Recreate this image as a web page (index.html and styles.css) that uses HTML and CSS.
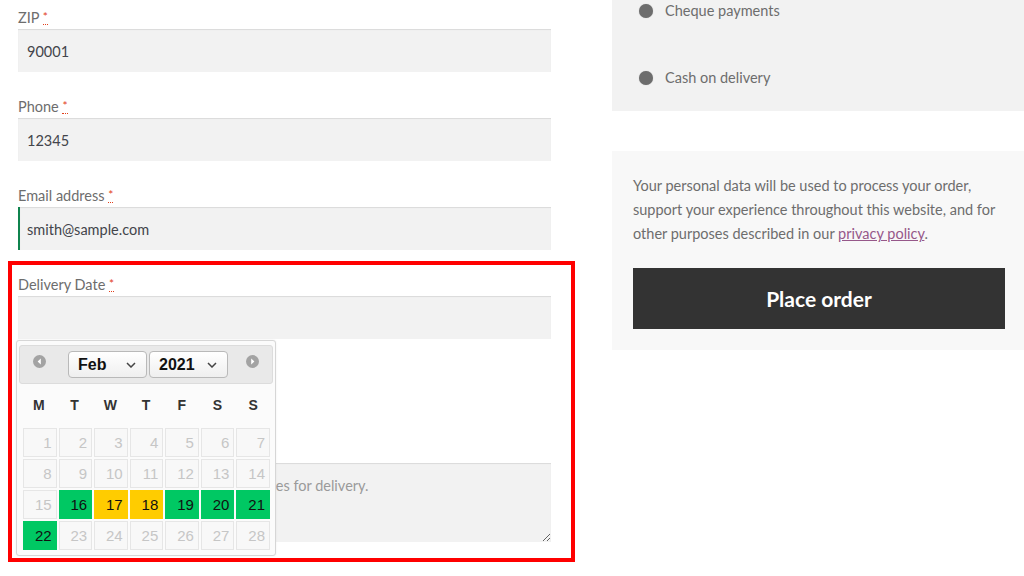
FILE: index.html
```html
<!DOCTYPE html>
<html lang="en">
<head>
<meta charset="utf-8">
<title>Checkout</title>
<link rel="stylesheet" href="styles.css">
</head>
<body>
<div class="page">
  <div class="billing">
    <div class="field">
      <label class="label">ZIP <abbr class="req">*</abbr></label>
      <div class="input">90001</div>
    </div>
    <div class="field">
      <label class="label">Phone <abbr class="req">*</abbr></label>
      <div class="input">12345</div>
    </div>
    <div class="field">
      <label class="label">Email address <abbr class="req">*</abbr></label>
      <div class="input input-valid">smith@sample.com</div>
    </div>
    <div class="field">
      <label class="label">Delivery Date <abbr class="req">*</abbr></label>
      <div class="input"></div>
    </div>
    <div class="section-gap"></div>
    <div class="field">
      <textarea class="notes" placeholder="Notes about your order, e.g. special notes for delivery."></textarea>
    </div>

    <div class="datepicker">
      <div class="dp-header">
        <span class="dp-nav"><svg width="13" height="13" viewBox="0 0 13 13"><circle cx="6.5" cy="6.5" r="6.5" fill="#a3a3a3"/><path d="M7.8 3.6 L4.6 6.5 L7.8 9.4 Z" fill="#fff"/></svg></span>
        <div class="dp-selects">
          <span class="dp-select dp-month">Feb<svg class="chev" width="10" height="6" viewBox="0 0 10 6"><path d="M1 1 L5 5 L9 1" fill="none" stroke="#444" stroke-width="1.5"/></svg></span>
          <span class="dp-select dp-year">2021<svg class="chev" width="10" height="6" viewBox="0 0 10 6"><path d="M1 1 L5 5 L9 1" fill="none" stroke="#444" stroke-width="1.5"/></svg></span>
        </div>
        <span class="dp-nav"><svg width="13" height="13" viewBox="0 0 13 13"><circle cx="6.5" cy="6.5" r="6.5" fill="#a3a3a3"/><path d="M5.2 3.6 L8.4 6.5 L5.2 9.4 Z" fill="#fff"/></svg></span>
      </div>
      <div class="dp-weekdays">
        <span>M</span><span>T</span><span>W</span><span>T</span><span>F</span><span>S</span><span>S</span>
      </div>
      <div class="dp-grid">
        <span class="day">1</span><span class="day">2</span><span class="day">3</span><span class="day">4</span><span class="day">5</span><span class="day">6</span><span class="day">7</span>
        <span class="day">8</span><span class="day">9</span><span class="day">10</span><span class="day">11</span><span class="day">12</span><span class="day">13</span><span class="day">14</span>
        <span class="day">15</span><span class="day open">16</span><span class="day busy">17</span><span class="day busy">18</span><span class="day open">19</span><span class="day open">20</span><span class="day open">21</span>
        <span class="day open">22</span><span class="day">23</span><span class="day">24</span><span class="day">25</span><span class="day">26</span><span class="day">27</span><span class="day">28</span>
      </div>
    </div>
    <div class="highlight"></div>
  </div>

  <div class="sidebar">
    <div class="payments">
      <div class="pay-item"><span class="radio"></span>Cheque payments</div>
      <div class="pay-item"><span class="radio"></span>Cash on delivery</div>
    </div>
    <div class="place">
      <p class="privacy">Your personal data will be used to process your order, support your experience throughout this website, and for other purposes described in our <a href="#" class="link">privacy policy</a>.</p>
      <button class="btn">Place order</button>
    </div>
  </div>
</div>
</body>
</html>
```

FILE: styles.css
```css
* { box-sizing: border-box; }
html, body { margin: 0; padding: 0; background: #fff; }
body {
  font-family: Lato, "Open Sans", "Liberation Sans", sans-serif;
  font-size: 15px;
  color: #6d6d6d;
  overflow: hidden;
  width: 1024px;
  height: 576px;
}
.page {
  display: flex;
  align-items: flex-start;
}
.billing {
  position: relative;
  width: 612px;
  padding: 5px 0 0 18px;
}
.field {
  width: 533px;
  margin-bottom: 22px;
}
.label {
  display: block;
  line-height: 26px;
  height: 24px;
  color: #6d6d6d;
  font-size: 14.5px;
}
.req {
  color: #e2401c;
  text-decoration: none;
  border-bottom: 1px dotted #e2401c;
  font-size: 12px;
  line-height: 1;
  vertical-align: 2px;
}
.input {
  height: 43px;
  background: #f2f2f2;
  box-shadow: inset 0 1px 1px rgba(0,0,0,0.1);
  padding: 0 9px;
  line-height: 45px;
  color: #43454b;
  font-size: 14.5px;
}
.input-valid {
  border-left: 2px solid #0f834d;
  padding-left: 7px;
}
.section-gap {
  height: 102px;
}
.notes {
  display: block;
  width: 533px;
  height: 79px;
  border: 0;
  background: #f2f2f2;
  box-shadow: inset 0 1px 1px rgba(0,0,0,0.1);
  padding: 11px 9px;
  font-family: Lato, "Open Sans", "Liberation Sans", sans-serif;
  font-size: 14.5px;
  line-height: 24px;
  color: #43454b;
  resize: vertical;
}
.notes::placeholder { color: #9a9a9a; }

/* datepicker overlay */
.datepicker {
  position: absolute;
  left: 16px;
  top: 340px;
  width: 260px;
  height: 216px;
  background: #fbfbfb;
  border: 1px solid #d6d6d6;
  border-radius: 3px;
  padding: 4px 2px 0 2px;
  font-family: "Liberation Sans", Arial, sans-serif;
  box-shadow: 0 0 2px rgba(0,0,0,0.08);
}
.dp-header {
  display: flex;
  align-items: center;
  justify-content: space-between;
  height: 39px;
  background: #e9e9e9;
  border: 1px solid #dcdcdc;
  border-radius: 3px;
  padding: 0 13px 0 13px;
}
.dp-nav { display: flex; width: 13px; height: 13px; margin-top: -6px; }
.dp-selects { display: flex; gap: 2px; margin-left: 4px; }
.dp-select {
  display: flex;
  align-items: center;
  justify-content: space-between;
  width: 79px;
  height: 27px;
  padding: 0 10px 0 9px;
  border: 1px solid #b9b9b9;
  border-radius: 4px;
  background: linear-gradient(#ffffff, #efefef);
  font-weight: bold;
  font-size: 16px;
  color: #111;
}
.chev { margin-top: 1px; }
.dp-weekdays {
  display: grid;
  grid-template-columns: repeat(7, 1fr);
  gap: 2px;
  padding: 0 3px;
  height: 42px;
  align-items: center;
  font-weight: bold;
  font-size: 14px;
  color: #333;
  text-align: center;
}
.dp-grid {
  display: grid;
  grid-template-columns: repeat(7, 1fr);
  grid-auto-rows: 29px;
  gap: 2px;
  padding: 2px 3px 0 4px;
}
.day {
  border: 1px solid #e6e6e6;
  background: #f8f8f8;
  color: #c6c6c6;
  font-size: 15px;
  text-align: right;
  padding-right: 4px;
  line-height: 27px;
}
.day.open { background: #00c863; border-color: #00c863; color: #111; }
.day.busy { background: #ffcc00; border-color: #ffcc00; color: #111; }

.highlight {
  position: absolute;
  left: 8px;
  top: 261px;
  width: 567px;
  height: 301px;
  border: 4px solid #ff0000;
  pointer-events: none;
}

/* sidebar */
.sidebar {
  width: 412px;
  display: flex;
  flex-direction: column;
}
.payments {
  background: #f2f2f2;
  padding: 0 0 22px 27px;
}
.pay-item {
  display: flex;
  align-items: center;
  line-height: 22px;
  height: 22px;
  color: #6d6d6d;
  font-size: 14.5px;
}
.pay-item + .pay-item { margin-top: 45px; }
.radio {
  width: 14px;
  height: 14px;
  border-radius: 50%;
  background: #6d6d6d;
  margin-right: 12px;
  box-shadow: 0 0 1px rgba(0,0,0,0.3);
}
.place {
  margin-top: 40px;
  background: #f8f8f8;
  padding: 23px 19px 21px 21px;
}
.privacy {
  margin: 0 0 22px 0;
  line-height: 24px;
  font-size: 14.5px;
  color: #6d6d6d;
}
.link { color: #96588a; text-decoration: underline; }
.btn {
  display: block;
  width: 372px;
  height: 61px;
  border: 0;
  background: #333333;
  color: #fff;
  font-family: Lato, "Open Sans", "Liberation Sans", sans-serif;
  font-weight: bold;
  font-size: 21px;
  cursor: pointer;
}
```
